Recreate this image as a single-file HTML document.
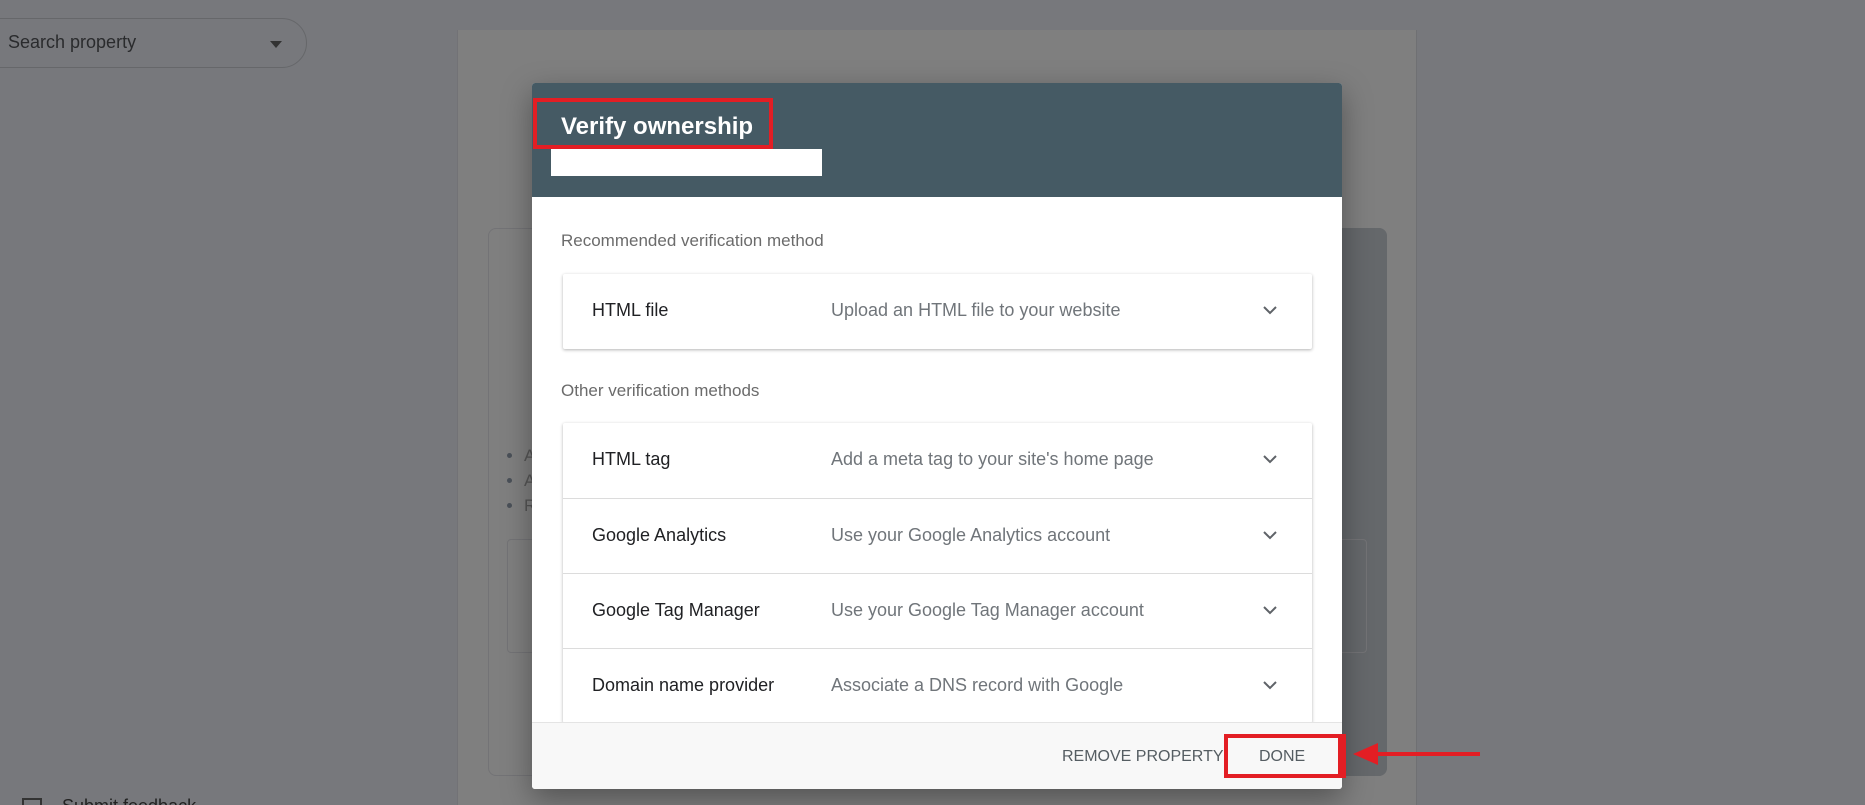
<!DOCTYPE html>
<html style="overflow:hidden;height:805px"><head><meta charset="utf-8"><style>
*{box-sizing:border-box;margin:0;padding:0}
body{width:1865px;height:805px;overflow:hidden;background:#77787c;font-family:"Liberation Sans",sans-serif;position:relative}
.abs{position:absolute}
.pill{left:-40px;top:18px;width:347px;height:50px;border:1px solid #66676a;border-radius:25px}
.pill span{position:absolute;left:47px;top:13px;font-size:18px;color:#2a2b2d}
.page{left:457px;top:30px;width:960px;height:775px;background:#7f7f7f;border-left:1px solid #727276;border-right:1px solid #6f7073}
.inner{left:488px;top:228px;width:899px;height:548px;background:#7f7f7f;border:1px solid #737376;border-radius:8px}
.innerdark{left:1342px;top:228px;width:45px;height:548px;background:#65686b;border-radius:0 8px 8px 0}
.box2{left:507px;top:539px;width:860px;height:114px;border:1px solid #737376;border-radius:4px}
.dot{width:5px;height:5px;border-radius:50%;background:#4a5058}
.bl{font-size:17px;color:#555}
.dlg{left:532px;top:83px;width:810px;height:706px;background:#fff;border-radius:3px;box-shadow:0 10px 30px rgba(0,0,0,.35);overflow:hidden}
.hdr{position:absolute;left:0;top:0;width:810px;height:114px;background:#455a64}
.title{position:absolute;left:29px;top:30px;font-size:24px;font-weight:bold;color:#fff}
.lab{position:absolute;left:29px;font-size:17px;color:#6b6b6b}
.card{position:absolute;left:31px;width:749px;background:#fff;box-shadow:0 1px 3px rgba(0,0,0,.3);border-radius:2px}
.row{position:relative;height:75px;border-top:1px solid #dcdcdc}
.row:first-child{border-top:none}
.row .a{position:absolute;left:29px;top:26px;font-size:18px;color:#202124}
.row .b{position:absolute;left:268px;top:26px;font-size:18px;color:#70757a}
.row svg{position:absolute;left:699px;top:31px}
.foot{position:absolute;left:0;top:639px;width:810px;height:67px;background:#f8f8f8;border-top:1px solid #e4e4e4}
.foot span{position:absolute;top:25px;font-size:16px;color:#555d62}
</style></head><body>
<div class="abs pill"><span>Search property</span><svg class="abs" style="left:309px;top:22px" width="12" height="7"><path d="M0 0H12L6 7Z" fill="#333"/></svg></div>
<div class="abs page"></div>
<div class="abs inner"></div>
<div class="abs innerdark"></div>
<div class="abs box2"></div>
<div class="abs dot" style="left:507px;top:453px"></div>
<div class="abs dot" style="left:507px;top:478px"></div>
<div class="abs dot" style="left:507px;top:503px"></div>
<div class="abs bl" style="left:524px;top:446px">A</div>
<div class="abs bl" style="left:524px;top:471px">A</div>
<div class="abs bl" style="left:524px;top:496px">R</div>
<div class="abs" style="left:0;top:790px;width:300px;height:15px;overflow:hidden">
 <div class="abs" style="left:22px;top:8px;width:20px;height:20px;border:2px solid #333"></div>
 <div class="abs" style="left:62px;top:6px;font-size:18px;color:#222">Submit feedback</div>
</div>

<div class="abs dlg">
 <div class="hdr"></div>
 <div class="title">Verify ownership</div>
 <div class="abs" style="left:1px;top:15px;width:240px;height:51px;border:4px solid #e31e24"></div>
 <div class="abs" style="left:19px;top:66px;width:271px;height:27px;background:#fff"></div>
 <div class="lab" style="top:148px">Recommended verification method</div>
 <div class="card" style="top:191px"><div class="row"><span class="a">HTML file</span><span class="b">Upload an HTML file to your website</span><svg width="16" height="10"><path d="M2 2L8 8L14 2" fill="none" stroke="#5f6368" stroke-width="2"/></svg></div></div>
 <div class="lab" style="top:298px">Other verification methods</div>
 <div class="card" style="top:340px">
  <div class="row"><span class="a">HTML tag</span><span class="b">Add a meta tag to your site's home page</span><svg width="16" height="10"><path d="M2 2L8 8L14 2" fill="none" stroke="#5f6368" stroke-width="2"/></svg></div>
  <div class="row"><span class="a">Google Analytics</span><span class="b">Use your Google Analytics account</span><svg width="16" height="10"><path d="M2 2L8 8L14 2" fill="none" stroke="#5f6368" stroke-width="2"/></svg></div>
  <div class="row"><span class="a">Google Tag Manager</span><span class="b">Use your Google Tag Manager account</span><svg width="16" height="10"><path d="M2 2L8 8L14 2" fill="none" stroke="#5f6368" stroke-width="2"/></svg></div>
  <div class="row"><span class="a">Domain name provider</span><span class="b">Associate a DNS record with Google</span><svg width="16" height="10"><path d="M2 2L8 8L14 2" fill="none" stroke="#5f6368" stroke-width="2"/></svg></div>
 </div>
 <div class="foot"><span style="left:530px">REMOVE PROPERTY</span><span style="left:727px">DONE</span></div>
 <div class="abs" style="left:692px;top:651px;width:118px;height:44px;border:4px solid #e31e24"></div>
</div>
<div class="abs" style="left:1342px;top:734px;width:4px;height:44px;background:#e31e24"></div>
<svg class="abs" style="left:1350px;top:740px" width="135" height="30"><path d="M3 14L28 3V25Z" fill="#e31e24"/><rect x="26" y="12" width="104" height="4" fill="#e31e24"/></svg>
</body></html>
